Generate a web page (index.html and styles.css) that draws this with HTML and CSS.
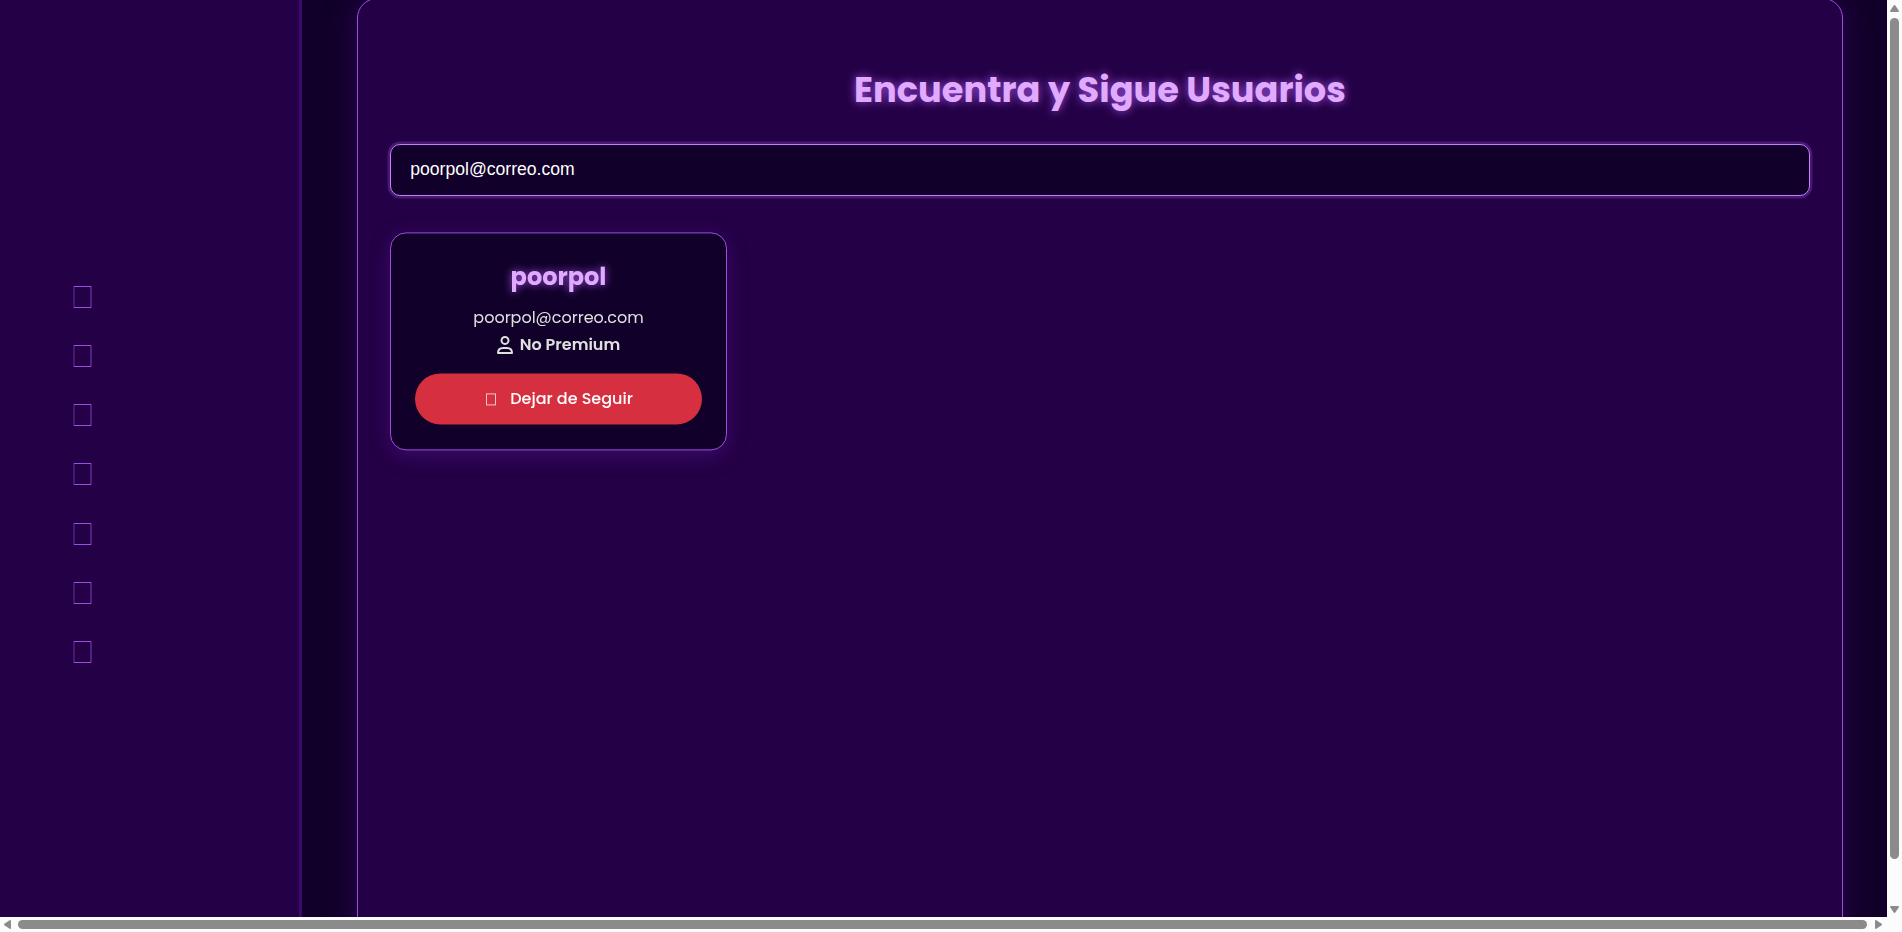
FILE: index.html
```html
<!DOCTYPE html>
<html lang="es">
<head>
<meta charset="utf-8">
<title>Encuentra y Sigue Usuarios</title>
<link rel="stylesheet" href="styles.css">
</head>
<body>
<div class="window">
  <div class="page">
    <nav class="sidebar">
      <i class="nav-icon"></i><i class="nav-icon"></i><i class="nav-icon"></i><i class="nav-icon"></i><i class="nav-icon"></i><i class="nav-icon"></i><i class="nav-icon"></i>
    </nav>
    <main class="content">
      <section class="panel">
        <h1 class="title"><span>Encuentra y Sigue Usuarios</span></h1>
        <input class="search" type="text" value="poorpol@correo.com">
        <div class="grid">
          <article class="card">
            <h2 class="name">poorpol</h2>
            <p class="email">poorpol@correo.com</p>
            <p class="status">
              <svg class="user" viewBox="0 0 16 18" width="16" height="19" fill="none" stroke="currentColor" stroke-width="2"><circle cx="8" cy="4.500" r="3.500"/><path d="M1 17C1 13.600 3.200 12 6 12h4c2.800 0 5 1.600 5 5z" stroke-linejoin="round"/></svg>
              <span>No Premium</span>
            </p>
            <button class="unfollow"><i class="btn-icon"></i><span>Dejar de Seguir</span></button>
          </article>
        </div>
      </section>
    </main>
  </div>
  <div class="vbar">
    <svg width="9" height="7" viewBox="0 0 9 7"><path d="M4.500 0Q5 0 5.500.7L9 6Q9 7 8 7H1Q0 7 0 6L3.500.7Q4 0 4.500 0z"/></svg>
    <div class="vthumb"></div>
    <svg class="down" width="9" height="7" viewBox="0 0 9 7"><path d="M4.500 7Q5 7 5.500 6.300L9 1Q9 0 8 0H1Q0 0 0 1L3.500 6.300Q4 7 4.500 7z"/></svg>
  </div>
  <div class="hbar">
    <svg width="7" height="9" viewBox="0 0 7 9"><path d="M0 4.500Q0 4 .7 3.500L6 0Q7 0 7 1V8Q7 9 6 9L.7 5.500Q0 5 0 4.500z"/></svg>
    <div class="hthumb"></div>
    <svg class="right" width="7" height="9" viewBox="0 0 7 9"><path d="M7 4.500Q7 4 6.300 3.500L1 0Q0 0 0 1V8Q0 9 1 9L6.300 5.500Q7 5 7 4.500z"/></svg>
  </div>
</div>
</body>
</html>
```
FILE: styles.css
```css
* { box-sizing: border-box; }
body { margin: 0; overflow: hidden; font-family: Poppins, Inter, "Open Sans", sans-serif; }
.window { display: grid; grid-template: 917px 15px / 1887px 15px; width: 1902px; height: 932px; background: #fcfcfc; }
.page { display: flex; overflow: hidden; background: #110029; }
.sidebar { width: 302px; flex: none; background: #240046; border-right: 3px solid #3c096c; padding: 286px 0 0 73px; display: flex; flex-direction: column; gap: 37.150px; }
.nav-icon { flex: none; width: 19px; height: 22px; background:
  linear-gradient(#9d4edd, #9d4edd) 1px 0 / 17px 1px no-repeat,
  linear-gradient(#9d4edd, #9d4edd) 1px 100% / 17px 1px no-repeat,
  linear-gradient(#481473, #481473) 0 0 / 2px 100% no-repeat,
  linear-gradient(#541e80, #541e80) 100% 0 / 2px 100% no-repeat; }
.content { flex: 1; padding: 0 44px 0 55px; }
.panel { margin-top: -2px; height: 1000px; padding: 64px 32px 32px; background: #240046; border: 1px solid #9d4edd; border-radius: 20px; box-shadow: 0 0 30px rgba(60, 9, 108, .6); }
.title { margin: 0 0 25px; height: 56px; line-height: 53px; text-align: center; font-size: 35.200px; font-weight: 700; color: #e0aaff; text-shadow: 0 0 10px #9d4edd; white-space: nowrap; }
.search { display: block; width: 100%; height: 52px; padding: 0 19.200px 2px; border: 1px solid #c77dff; border-radius: 10px; outline: 0; background: #110029; color: #fff; font: 17.600px "Liberation Sans", Arial, sans-serif; box-shadow: 0 0 0 2.400px rgba(157, 78, 221, .3); }
.grid { display: grid; grid-template-columns: repeat(4, 1fr); gap: 24px; margin-top: 36px; }
.card { height: 218px; padding: 24px; background: #110029; border: 1px solid #9d4edd; border-radius: 16px; box-shadow: 0 5px 20px rgba(90, 24, 154, .4); text-align: center; color: #e0e0e0; transform: translateY(.4px); will-change: transform; }
.name { margin: 0; height: 45px; line-height: 40px; font-size: 24px; font-weight: 700; color: #e0aaff; text-shadow: 0 0 8px #9d4edd; }
.email { margin: 0; height: 27px; line-height: 31px; font-size: 16px; }
.status { margin: 0 0 15px; padding-top: 2px; height: 29px; display: flex; align-items: center; justify-content: center; gap: 7px; font-size: 16px; font-weight: 600; }
.unfollow { width: 100%; height: 51px; padding: 0 0 0 2px; border: 0; border-radius: 26px; background: #d62f3f; color: #fff; font: 500 16px Poppins, Inter, sans-serif; display: flex; align-items: center; justify-content: center; gap: 14px; }
.btn-icon { width: 10px; height: 12px; border: 1px solid #f3c5c9; }
.vbar svg, .hbar svg { display: block; fill: #8b8b8b; }
.vbar { padding: 5px 0 0 3px; }
.vthumb { width: 9px; height: 841px; margin: 6px 0 47px; border-radius: 5px; background: #8b8b8b; }
.hbar { display: flex; align-items: center; padding: 0 0 1px 4px; height: 15px; }
.hthumb { width: 1849px; height: 9px; margin: 0 8px 0 7px; border-radius: 5px; background: #8b8b8b; }
```
